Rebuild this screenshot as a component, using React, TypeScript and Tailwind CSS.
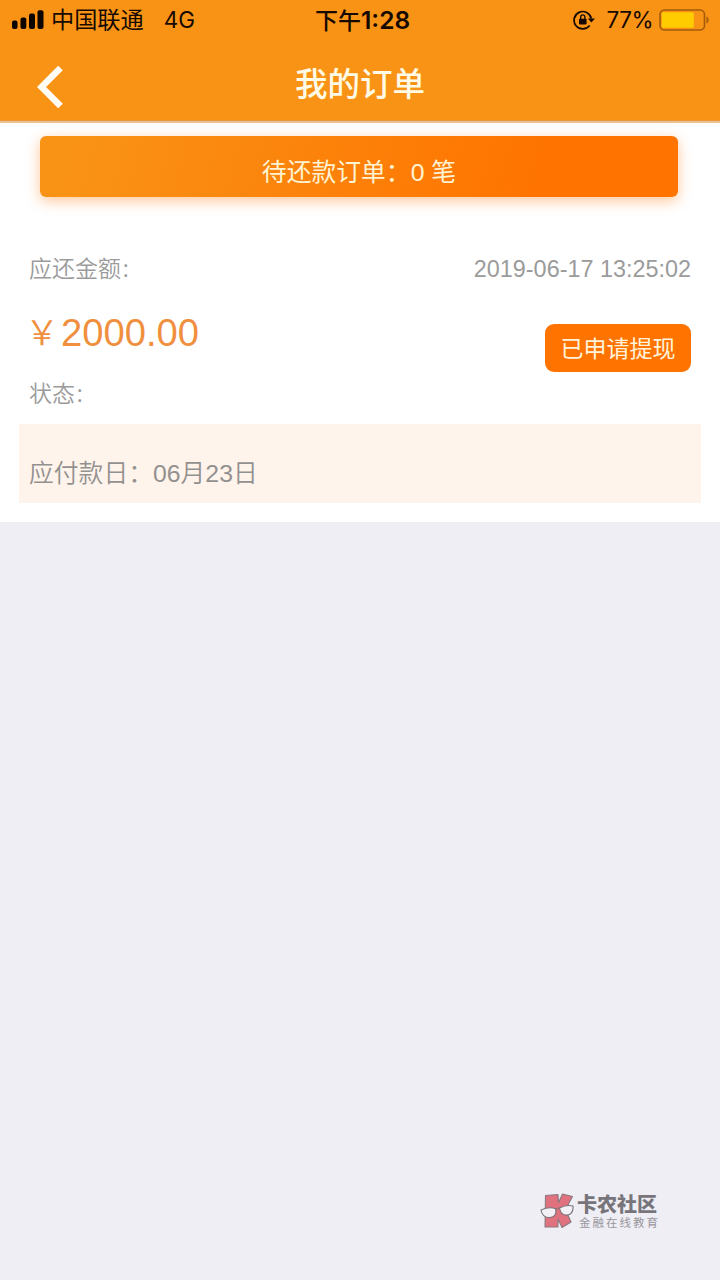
import React from "react";

const CJK = "font-['Liberation_Sans','Noto_Sans_CJK_SC',sans-serif]";

//icons
const SignalIcon = () => (
  <svg width="32" height="20" viewBox="0 0 32 20" fill="#0d0500">
    <rect x="0" y="10.500" width="5.500" height="8.500" rx="2" />
    <rect x="8.500" y="7.500" width="5.800" height="11.500" rx="2" />
    <rect x="17" y="3.500" width="6" height="15.500" rx="2" />
    <rect x="25.500" y="0.200" width="6" height="18.800" rx="2" />
  </svg>
);

const RotationLockIcon = () => (
  <svg width="22" height="20" viewBox="0 0 22 20" fill="none">
    <path
      d="M18.300 8.500A8.700 8.700 0 1 0 16.700 15.500"
      stroke="#140800"
      strokeWidth="1.700"
    />
    <path d="M14.800 8.600h7.200l-3.600 4z" fill="#140800" />
    <rect x="6" y="8.800" width="7.600" height="5.600" rx="0.800" fill="#140800" />
    <path
      d="M7.700 9V7a2.100 2.100 0 0 1 4.200 0v2"
      stroke="#140800"
      strokeWidth="1.400"
    />
  </svg>
);

const BatteryIcon = () => (
  <svg width="51" height="22" viewBox="0 0 51 22" fill="none">
    <rect x="1" y="1" width="44.500" height="20" rx="4.500" stroke="#a45c0b" strokeWidth="1.600" />
    <rect x="2.800" y="3.300" width="32" height="15.500" rx="1.500" fill="#ffcc00" />
    <path d="M47.500 7.500c2.800 1.200 2.800 6 0 7.200z" fill="#a45c0b" />
  </svg>
);

const BackIcon = () => (
  <svg width="28" height="42" viewBox="0 0 28 42" fill="none">
    <path d="M23.500 2 4.500 21 23.500 40" stroke="#fffdf5" strokeWidth="6.500" />
  </svg>
);

const CommunityLogo = () => (
  <svg width="34" height="36" viewBox="0 0 34 36" strokeLinejoin="round">
    <path
      d="M5.500 2.500 18 1.500l.5 8L22.500 1l10 2.500-7 13 5.500 12.500-9 5.500L18 26v8H5z"
      fill="#e0717f"
      stroke="#8a7a80"
      strokeWidth="1.100"
    />
    <path
      d="M1 17q7.500-3.500 14.500-1.500 2 8-5.500 9-7.500.5-9-7.500zM19.500 15q7-3.500 13.500-2 .5 8-5.500 9-6.500 1-8-7z"
      fill="#f3f1f6"
      stroke="#777278"
      strokeWidth="1.100"
    />
    <path d="M15.500 16.500q2-1.500 4-1.500" fill="none" stroke="#777278" strokeWidth="1.100" />
  </svg>
);

const StatusBar = () => (
  <div className="flex h-10 items-center pl-3 pr-[10px] text-[#160900] font-['Inter','Noto_Sans_CJK_SC',sans-serif]">
    <div className="flex w-[303px] items-center">
      <SignalIcon />
      <span className="ml-[7px] text-[23.200px] leading-10">中国联通</span>
      <span className="ml-5 text-[22.500px] leading-10">4G</span>
    </div>
    <span className="text-[23px] font-medium leading-10">
      下午<span className="text-[24.500px] font-semibold">1:28</span>
    </span>
    <div className="ml-auto flex items-center">
      <RotationLockIcon />
      <span className="ml-[12px] text-[22.500px] leading-10 tracking-[-0.500px]">77%</span>
      <span className="ml-[6px]">
        <BatteryIcon />
      </span>
    </div>
  </div>
);

const OrderCard = () => (
  <div className="px-5">
    <div className="flex justify-between px-[9px] text-[#9b9b9b]">
      <div className="flex flex-col">
        <span className="h-[34px] text-[23px] font-[350] leading-[34px]">
          应还金额<span className="text-[19px]">：</span>
        </span>
        <span className="mt-[25px] flex h-[44px] items-center text-[38.200px] leading-[44px] text-[#f0903f]">
          <span className="-ml-[4px] w-[36px] pb-[4px] font-['Noto_Sans_CJK_SC',sans-serif] text-[34px] font-[350]">
            ￥
          </span>
          2000.00
        </span>
        <span className="mt-[22px] h-[34px] text-[23px] font-[350] leading-[34px]">
          状态<span className="text-[19px]">：</span>
        </span>
      </div>
      <div className="flex flex-col items-end">
        <span className="text-[23.400px] leading-[34px]">2019-06-17 13:25:02</span>
        <button
          className="mt-[38px] h-12 w-[146px] rounded-[9px] bg-[#ff7300] pt-px text-[23px] leading-[48px] text-[#fff3dc]"
          type="button"
        >
          已申请提现
        </button>
      </div>
    </div>
    <div className="-mx-px mt-[13px] h-[79px] bg-[#fff4eb] pl-[10px] pt-[32px] text-[24.800px] font-[350] leading-[36px] text-[#939190]">
      应付款日：06月23日
    </div>
  </div>
);

const App = () => {
  return (
    <div className={`relative flex h-[1280px] w-[720px] flex-col bg-[#efeef5] ${CJK}`}>
      <header className="h-[123px] border-b-2 border-[#ebc190] bg-[#f99316] shadow-[inset_0_-1px_0_#e3963f]">
        <StatusBar />
        <div className="grid h-[81px] grid-cols-[1fr_auto_1fr] items-center">
          <span className="pl-[37px] pt-[13px]">
            <BackIcon />
          </span>
          <h1 className="pt-[8px] text-[32.500px] font-medium leading-[48px] text-[#fffbe6]">
            我的订单
          </h1>
        </div>
      </header>

      <main className="h-[399px] bg-white pt-[13px]">
        <div className="ml-10 mb-[55px] h-[61px] w-[638px] rounded-[6px] bg-linear-[105deg,#f99316_5%,#ff7300_80%] pt-[19px] text-center text-[24.800px] leading-[36px] text-[#fff3d2] shadow-[0_4px_14px_rgba(255,115,0,0.4)]">
          待还款订单：0 笔
        </div>
        <OrderCard />
      </main>

      <div className="absolute left-[540px] top-[1192px] flex items-center gap-[3px]">
        <CommunityLogo />
        <div className="flex flex-col pt-[2px] text-[#77757a]">
          <span className="text-[20px] font-black leading-[23px]">卡农社区</span>
          <span className="pl-[2px] text-[11.500px] leading-[12px] tracking-[2px] text-[#98969c]">
            金融在线教育
          </span>
        </div>
      </div>
    </div>
  );
};

export default App;
